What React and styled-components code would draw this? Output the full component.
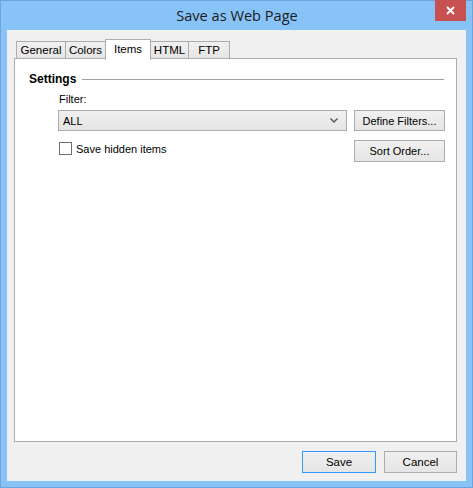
import React from 'react';
import styled, { createGlobalStyle } from 'styled-components';

const GlobalStyle = createGlobalStyle`
html, body {
  margin: 0;
  padding: 0;
  background: #ffffff;
}
* { box-sizing: border-box; }
`;

const WINDOW = styled.div`
width: 473px;
height: 488px;
background: #88c3f7;
border: 1px solid #6ea4dc;
display: flex;
flex-direction: column;
font-family: "Liberation Sans", Arial, sans-serif;
font-size: 11px;
color: #000;
`;

const TITLEBAR = styled.div`
height: 29px;
flex-shrink: 0;
display: flex;
align-items: center;
justify-content: center;
position: relative;
.title {
  font-family: "Open Sans", "Noto Sans", sans-serif;
  font-size: 14.6px;
  color: #1c1c1c;
  margin-top: -1px;
  margin-left: 1px;
}
`;

const CLOSE = styled.div`
position: absolute;
top: -1px;
right: 6px;
width: 31px;
height: 21px;
background: #c75050;
color: #fff;
display: flex;
align-items: center;
justify-content: center;
svg { display: block; }
`;

const CLIENT = styled.div`
flex: 1;
margin: 0 6px 7px 6px;
background: #f0f0f0;
padding: 8px 9px 8px 7px;
display: flex;
flex-direction: column;
`;

const TABSTRIP = styled.div`
display: flex;
align-items: flex-end;
height: 21px;
padding-left: 2px;
position: relative;
z-index: 1;
`;

const TAB = styled.div`
width: ${p => p.$w}px;
height: ${p => (p.$active ? 21 : 18)}px;
margin-left: ${p => (p.$first ? 0 : -1)}px;
border: 1px solid #acacac;
border-bottom: ${p => (p.$active ? 'none' : '1px solid #acacac')};
background: ${p => (p.$active ? '#ffffff' : 'linear-gradient(#f0f0f0, #e5e5e5)')};
display: flex;
align-items: ${p => (p.$active ? 'flex-start' : 'center')};
justify-content: center;
padding-top: ${p => (p.$active ? 3 : 0)}px;
margin-bottom: ${p => (p.$active ? -1 : 0)}px;
position: relative;
z-index: ${p => (p.$active ? 2 : 1)};
font-size: 11.5px;
`;

const PANEL = styled.div`
height: 384px;
margin-top: -1px;
background: #ffffff;
border: 1px solid #acacac;
padding: 13px 12px 0 14px;
`;

const HEADER = styled.div`
display: flex;
align-items: center;
height: 14px;
gap: 6px;
.label {
  font-weight: bold;
  font-size: 12px;
}
.rule {
  flex: 1;
  height: 1px;
  background: #a0a0a0;
}
`;

const SECTION = styled.div`
margin: 6px 0 0 29px;
display: grid;
grid-template-columns: 289px 91px;
column-gap: 7px;
row-gap: 9px;
`;

const LABEL = styled.div`
grid-column: 1 / span 2;
height: 14px;
line-height: 14px;
margin-left: 1px;
margin-bottom: -5px;
`;

const SELECT = styled.div`
height: 21px;
border: 1px solid #acacac;
background: linear-gradient(#f0f0f0, #e5e5e5);
display: flex;
align-items: center;
justify-content: space-between;
padding: 0 8px 0 4px;
svg { display: block; }
`;

const BUTTON = styled.div`
height: ${p => p.$h || 21}px;
width: ${p => (p.$w ? p.$w + 'px' : 'auto')};
border: 1px solid ${p => (p.$default ? '#3399ff' : '#acacac')};
background: linear-gradient(#f0f0f0, #e5e5e5);
display: flex;
align-items: center;
justify-content: center;
font-size: ${p => p.$fs || 11}px;
`;

const CHECKROW = styled.label`
display: flex;
align-items: center;
gap: 4px;
align-self: start;
margin: 2px 0 0 1px;
.box {
  width: 13px;
  height: 13px;
  border: 1px solid #707070;
  background: #fff;
}
`;

const FOOTER = styled.div`
display: flex;
justify-content: flex-end;
gap: 8px;
margin-top: 9px;
`;

const tabs = [
  { name: 'General', w: 50 },
  { name: 'Colors', w: 41 },
  { name: 'Items', w: 46, active: true },
  { name: 'HTML', w: 39 },
  { name: 'FTP', w: 42 },
];

const App = () => {
  return (
    <WINDOW>
      <GlobalStyle />
      <TITLEBAR>
        <span className="title">Save as Web Page</span>
        <CLOSE>
          <svg width="9" height="9" viewBox="0 0 9 9">
            <path d="M1 1 L8 8 M8 1 L1 8" stroke="#fff" strokeWidth="1.8" />
          </svg>
        </CLOSE>
      </TITLEBAR>
      <CLIENT>
        <TABSTRIP>
          {tabs.map((t, i) => (
            <TAB key={t.name} $w={t.w} $active={t.active} $first={i === 0}>
              {t.name}
            </TAB>
          ))}
        </TABSTRIP>
        <PANEL>
          <HEADER>
            <span className="label">Settings</span>
            <span className="rule" />
          </HEADER>
          <SECTION>
            <LABEL>Filter:</LABEL>
            <SELECT>
              <span>ALL</span>
              <svg width="8" height="5" viewBox="0 0 8 5">
                <path d="M0.5 0.5 L4 4 L7.5 0.5" stroke="#555" strokeWidth="1.4" fill="none" />
              </svg>
            </SELECT>
            <BUTTON>Define Filters...</BUTTON>
            <CHECKROW>
              <span className="box" />
              <span>Save hidden items</span>
            </CHECKROW>
            <BUTTON $h={22}>Sort Order...</BUTTON>
          </SECTION>
        </PANEL>
        <FOOTER>
          <BUTTON $w={74} $h={22} $fs={11.5} $default>Save</BUTTON>
          <BUTTON $w={73} $h={22} $fs={11.5}>Cancel</BUTTON>
        </FOOTER>
      </CLIENT>
    </WINDOW>
  );
};

export default App;
